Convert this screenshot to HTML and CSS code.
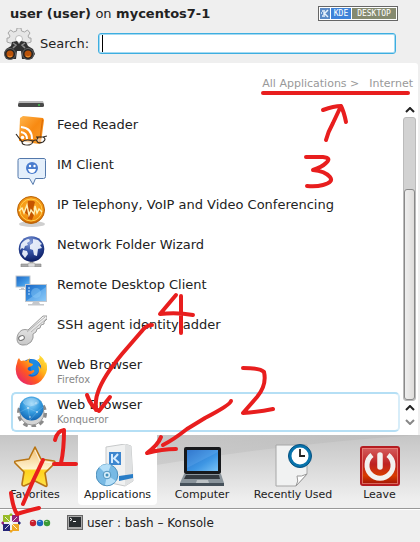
FILE: index.html
```html
<!DOCTYPE html>
<html lang="en">
<head>
<meta charset="utf-8">
<title>Application Launcher</title>
<meta name="viewport" content="width=device-width, initial-scale=1">
<link rel="stylesheet" href="styles.css">
</head>
<body>
<svg class="defs" width="0" height="0" aria-hidden="true">
  <defs>
    <linearGradient id="orange" x1="0" y1="0" x2="1" y2="1"><stop offset="0" stop-color="#ffb64d"/><stop offset=".5" stop-color="#f88a12"/><stop offset="1" stop-color="#f79d2e"/></linearGradient>
    <linearGradient id="screen" x1="0" y1="0" x2="1" y2="1"><stop offset="0" stop-color="#1c66c4"/><stop offset=".6" stop-color="#3f97e4"/><stop offset="1" stop-color="#79c2f5"/></linearGradient>
    <linearGradient id="metal" x1="0" y1="0" x2="0" y2="1"><stop offset="0" stop-color="#f6f6f6"/><stop offset="1" stop-color="#c8c8c8"/></linearGradient>
    <radialGradient id="globe" cx=".45" cy=".25" r=".75"><stop offset="0" stop-color="#8fa5dc"/><stop offset=".45" stop-color="#3553a6"/><stop offset="1" stop-color="#0b1d63"/></radialGradient>
    <radialGradient id="sky" cx=".5" cy=".3" r=".75"><stop offset="0" stop-color="#8fd2f8"/><stop offset=".5" stop-color="#3399dd"/><stop offset="1" stop-color="#0d5cab"/></radialGradient>
    <radialGradient id="coin" cx=".5" cy=".4" r=".6"><stop offset="0" stop-color="#ffb52e"/><stop offset=".8" stop-color="#f08c0c"/><stop offset="1" stop-color="#c05a00"/></radialGradient>
    <linearGradient id="gold" x1="0" y1="0" x2="0" y2="1"><stop offset="0" stop-color="#f0bd72"/><stop offset=".55" stop-color="#fff3cf"/><stop offset=".6" stop-color="#ffd21c"/><stop offset="1" stop-color="#ffe34a"/></linearGradient>
    <linearGradient id="fox" x1="1" y1="0" x2="0" y2="1"><stop offset="0" stop-color="#fff04a"/><stop offset=".35" stop-color="#ffb31a"/><stop offset=".6" stop-color="#ff5a1f"/><stop offset="1" stop-color="#e0108a"/></linearGradient>
    <linearGradient id="red" x1="0" y1="0" x2="0" y2="1"><stop offset="0" stop-color="#d66060"/><stop offset=".45" stop-color="#be2222"/><stop offset=".75" stop-color="#d83c00"/><stop offset="1" stop-color="#9c1006"/></linearGradient>
    <linearGradient id="swoosh" x1="0" y1="0" x2="1" y2="0"><stop offset="0" stop-color="#c6c6c6"/><stop offset="1" stop-color="#b9b9b9"/></linearGradient>
  </defs>
</svg>

<header class="header">
  <div class="title-row">
    <h1 class="title">user (user) <span class="on">on</span> mycentos7-1</h1>
    <div class="badge">
      <svg class="badge-logo" viewBox="0 0 10 11" aria-hidden="true"><rect width="10" height="11" fill="#5b8ac6"/><path d="M4 2v7M8 2L4.500 5.500L8 9M2 3h1M1 5h1M2 8h1" stroke="#e7f1fc" stroke-width="1.500" fill="none"/></svg>
      <span class="badge-kde">KDE</span><span class="badge-desktop">DESKTOP</span>
    </div>
  </div>
  <div class="search-row">
    <svg class="search-icon" viewBox="0 0 32 32" aria-hidden="true">
      <path d="M14 0h4l.5 3 3 1 3-2 2.500 3-2 3 1 2h2v4l-3 1H7l-3-1v-4h2l1-2-2-3 2.500-3 3 2 3-1z" fill="#e6e6e6" stroke="#a5a5a5"/>
      <circle cx="16" cy="11" r="3.500" fill="#fff" stroke="#bbb"/>
      <path d="M9 14l5-1 2 3 2-3 5 1 2 4 5 3 2 5-3 5H19l-1-8h-4l-1 8H3l-2-6 2-4 5-3z" fill="#303030"/>
      <path d="M10 15l3 2-3 3M22 15l-3 2 3 3" stroke="#8c8c8c" stroke-width="1.500" fill="none"/>
      <circle cx="7" cy="26" r="5.500" fill="#222" stroke="#656565"/><circle cx="25" cy="26" r="5.500" fill="#222" stroke="#656565"/>
      <circle cx="7" cy="26" r="3.500" fill="#b95209"/><circle cx="25" cy="26" r="3.500" fill="#b95209"/>
      <path d="M5 28q2 2 4 0M23 28q2 2 4 0" stroke="#f39a37" fill="none"/>
    </svg>
    <label class="search-label" for="search">Search:</label>
    <div class="search-box"><input id="search" class="search-input" type="text"><span class="caret"></span></div>
  </div>
</header>

<main class="panel">
  <nav class="crumbs"><a href="#all">All Applications &gt;</a><a href="#internet">Internet</a></nav>
  <div class="content">
    <ul class="apps">
      <li class="app-cut"><svg viewBox="0 0 32 8" aria-hidden="true"><path d="M4 0h24l1 3H3z" fill="#b8b8b8"/><rect x="3" y="2" width="26" height="4" rx="1.500" fill="#484848"/><circle cx="24" cy="4" r="1" fill="#42c34c"/></svg></li>
      <li><a class="app" href="#feed">
        <svg class="app-icon" viewBox="0 0 32 32" aria-hidden="true"><path d="M5 3l3-2 20 2 1 2-3 23-2 1-20-3z" fill="url(#orange)"/><path d="M27 4l1 1-3 23-1-1z" fill="#d96b08"/><g fill="none" stroke="#fff" stroke-width="2"><path d="M6 17q6 1 6 7M6 12q11 1 11 12"/></g><circle cx="7.500" cy="22.500" r="1.800" fill="#fff"/><path d="M1 19l6 8q0 3 5 3t6-4q3-2 4 0 1 3 6 1 4-3 0-5l-7 0M7 27q4-3 11-1M22 26l1-4M28 22l4-1" fill="none" stroke="#332b23" stroke-width="1.200"/><ellipse cx="12.500" cy="27.500" rx="4.500" ry="2" fill="#fff" opacity=".6"/><ellipse cx="25" cy="25" rx="3" ry="1.800" fill="#fff" opacity=".5"/></svg>
        <span class="app-text"><span class="app-name">Feed Reader</span></span></a></li>
      <li><a class="app" href="#im">
        <svg class="app-icon" viewBox="0 0 32 32" aria-hidden="true"><path d="M4.500 3.500h25q1 0 1 2v16q0 2-2 2h-8l-2.500 6-3.500-6h-10q-1.500 0-1.500-2v-16q0-2 1.500-2z" fill="#e4effb" stroke="#5378ab"/><circle cx="17" cy="13" r="6" fill="#4a7cce"/><circle cx="15" cy="11" r="1.200" fill="#fff"/><circle cx="19.500" cy="11" r="1.200" fill="#fff"/><path d="M13 14h8q-1 4-4 4t-4-4z" fill="#fff"/></svg>
        <span class="app-text"><span class="app-name">IM Client</span></span></a></li>
      <li><a class="app" href="#telephony">
        <svg class="app-icon" viewBox="0 0 32 32" aria-hidden="true"><ellipse cx="17" cy="29" rx="13" ry="3" fill="#bbb" opacity=".7"/><circle cx="16" cy="15" r="13.500" fill="url(#coin)" stroke="#b8660b"/><circle cx="16" cy="15" r="11" fill="none" stroke="#ffd04f"/><path d="M13 6q5-1 7 1l-2 7 2 3-3 8-4-1v-4l-4-3 3-5z" fill="#c55500"/><path d="M4 16l3-3 2 5 3-8 2 10 2-5 3 4 1-8 2 7 2-4 3 3" fill="none" stroke="#fff1b5" stroke-width="1.400"/></svg>
        <span class="app-text"><span class="app-name">IP Telephony, VoIP and Video Conferencing</span></span></a></li>
      <li><a class="app" href="#network">
        <svg class="app-icon" viewBox="0 0 32 32" aria-hidden="true"><path d="M15 26h3v3h8v3H6v-3h9z" fill="#aaa" stroke="#858585" stroke-width=".6"/><rect x="13" y="28" width="7" height="4" rx="1" fill="#ddd" stroke="#999" stroke-width=".6"/><circle cx="16.500" cy="14" r="12.800" fill="url(#globe)"/><path d="M6 9q4-5 8-5l1 2-3 2 1 2-3 1-1 3-2-1-2 2zM18 4l5 1 4 4-2 1 2 3-4 1-1 7-3-1-1-5-3-1v-4l3-2zM8 15l4 1 1 3-3 4-3-4z" fill="#eef3fc" opacity=".93"/></svg>
        <span class="app-text"><span class="app-name">Network Folder Wizard</span></span></a></li>
      <li><a class="app" href="#remote">
        <svg class="app-icon" viewBox="0 0 32 32" aria-hidden="true"><g stroke="#c1c7cf"><rect x="1" y="1" width="14" height="11" fill="url(#screen)"/><rect x="10.500" y="9.500" width="21" height="17" fill="url(#screen)"/></g><path d="M6 13h3v1h2v1H4v-1h2zM18 27h6l1 2h4v1.500H13V29h4z" fill="#c5c8cc"/><path d="M13 13h2M13 16h2M13 19h2" stroke="#c6e5ff"/><path d="M11 26L31 12v14z" fill="#b4ddff" opacity=".35"/><circle cx="21" cy="18" r="5" fill="#8fcdf8" opacity=".45"/></svg>
        <span class="app-text"><span class="app-name">Remote Desktop Client</span></span></a></li>
      <li><a class="app" href="#ssh">
        <svg class="app-icon" viewBox="0 0 32 32" aria-hidden="true"><path d="M28 1h4v3l-3 3v2l-3 1-1 3-3 1-1 3-3 2q1 4-2 8-4 4-9 3-5-1-5-6 0-6 5-9 3-1 6 0z" fill="url(#metal)" stroke="#929292" stroke-width=".9"/><path d="M12 17L30 2M16 17L31 4" stroke="#b5b5b5" stroke-width="1"/><ellipse cx="6.500" cy="23" rx="3" ry="2.200" fill="#fff" stroke="#777" transform="rotate(-25 6.500 23)"/></svg>
        <span class="app-text"><span class="app-name">SSH agent identity adder</span></span></a></li>
      <li><a class="app" href="#firefox">
        <svg class="app-icon" viewBox="0 0 32 32" aria-hidden="true"><circle cx="16" cy="15" r="11" fill="#1765cf"/><path d="M15 5q5-2 8 2 3 4 1 9-3 5-8 4" fill="#20a4ee" opacity=".6"/><path d="M4 3q1 2 2 3 3-1 5 0l4-3q-2 4 0 5l3 1q0 2-4 3-2 1-1 3 3 2 5 0 2 0 1 2-3 3-6 3 3 3 7 1 6-3 3-10 3 1 3 3 1-5-4-9 4-1 2-5 5 3 6 8 1-1 1-1 3 8-2 15-5 8-13 8-8 0-13-7-4-8-1-15 0-3 2-5z" fill="url(#fox)"/></svg>
        <span class="app-text"><span class="app-name">Web Browser</span><span class="app-sub">Firefox</span></span></a></li>
      <li><a class="app app-selected" href="#konqueror">
        <svg class="app-icon" viewBox="0 0 32 32" aria-hidden="true"><circle cx="17" cy="18" r="13" fill="none" stroke="#8a8a8a" stroke-width="4" stroke-dasharray="4.500 3.670"/><circle cx="17" cy="18" r="12" fill="#d5d5d5" stroke="#999"/><circle cx="16.500" cy="13.500" r="12" fill="url(#sky)"/><path d="M5 17l8-4 9 4 6-5M8 7l5 6 9-6M13 13l2 12 7-8" stroke="#b7e3ff" stroke-width=".5" fill="none" opacity=".45"/><ellipse cx="16" cy="7" rx="8" ry="4" fill="#fff" opacity=".25"/><g fill="#fff"><circle cx="13" cy="13" r=".8"/><circle cx="22" cy="17" r=".8"/><circle cx="21" cy="8" r=".6"/><circle cx="15" cy="22" r=".7"/></g></svg>
        <span class="app-text"><span class="app-name">Web Browser</span><span class="app-sub">Konqueror</span></span></a></li>
    </ul>
    <div class="scroll">
      <button class="scroll-btn" type="button" aria-label="Up"><svg viewBox="0 0 10 6"><path d="M1 5l4-4 4 4" fill="none" stroke="#222" stroke-width="2"/></svg></button>
      <div class="track"><div class="thumb"></div></div>
      <button class="scroll-btn" type="button" aria-label="Page up"><svg viewBox="0 0 10 6"><path d="M1 5l4-4 4 4" fill="none" stroke="#222" stroke-width="2"/></svg></button>
      <button class="scroll-btn" type="button" aria-label="Down"><svg viewBox="0 0 10 6"><path d="M1 1l4 4 4-4" fill="none" stroke="#888" stroke-width="2"/></svg></button>
    </div>
  </div>
</main>

<nav class="tabs">
  <svg class="tabs-shade" viewBox="0 0 420 70" preserveAspectRatio="none" aria-hidden="true"><path d="M150 0H420Q290 8 150 31z" fill="url(#swoosh)" opacity=".65"/></svg>
  <button class="tab tab-first" type="button">
    <svg class="tab-icon" viewBox="0 0 44 44" aria-hidden="true"><path d="M22 3l6 12 13 2q2 1 0 3l-9 9 2 12q0 2-2 1l-10-5-11 5q-2 0-2-2l2-12-9-9q-1-2 1-2l13-2z" fill="url(#gold)" stroke="#b87514" stroke-width="1.600" stroke-linejoin="round"/><path d="M22 6l5 11 12 2" fill="none" stroke="#fff" opacity=".7"/></svg>
    <span>Favorites</span></button>
  <button class="tab tab-active" type="button">
    <svg class="tab-icon" viewBox="0 0 44 44" aria-hidden="true"><path d="M10 3L29 0 35 2 37 37 29 42 10 38z" fill="#f0f1f1" stroke="#c7c9ca"/><path d="M29 0l6 2 2 35-8 5z" fill="#dfe1e2"/><rect x="13" y="8" width="12" height="13" fill="#3d86cf"/><path d="M16 10v9M22 10l-4 4.500 5 4.500" stroke="#d6ecff" stroke-width="2" fill="none"/><path d="M23 32l14-2v4l-14 3z" fill="#287dc7"/><circle cx="11" cy="31" r="10.800" fill="#77b9e4" stroke="#4e91bd"/><path d="M11 31L3 23q7-5 12-2zM11 31l9 6q-5 5-11 4z" fill="#c4e9fc" opacity=".8"/><circle cx="11" cy="31" r="3.800" fill="#d7eefa" stroke="#5094bf"/><circle cx="11" cy="31" r="1.500" fill="#438fbb"/></svg>
    <span>Applications</span></button>
  <button class="tab" type="button">
    <svg class="tab-icon" viewBox="0 0 44 44" aria-hidden="true"><rect x="4" y="3" width="37" height="27" rx="2" fill="#17191c"/><rect x="7" y="6" width="31" height="21" fill="url(#screen)"/><path d="M7 6h31v2L7 24z" fill="#99ceff" opacity=".18"/><path d="M4 30h37l3 9H0z" fill="#8a949b"/><path d="M6 31h33l1 4H4z" fill="#343a40"/><path d="M17 36h11l1 3H16z" fill="#bcc2c5"/><path d="M0 39h44v3H0z" fill="#46515a"/></svg>
    <span>Computer</span></button>
  <button class="tab" type="button">
    <svg class="tab-icon" viewBox="0 0 44 44" aria-hidden="true"><path d="M5 1h31v29L25 42H5z" fill="#f1f2f2" stroke="#a6a6a6"/><path d="M25 42q3-5 1-10 4 1 10-2z" fill="#fff" stroke="#999"/><circle cx="29" cy="12" r="10" fill="#fff" stroke="#0873ac" stroke-width="3"/><circle cx="29" cy="12" r="11.500" fill="none" stroke="#075180"/><path d="M29 5v7h5" fill="none" stroke="#222" stroke-width="1.800"/></svg>
    <span>Recently Used</span></button>
  <button class="tab" type="button">
    <svg class="tab-icon" viewBox="0 0 44 44" aria-hidden="true"><rect x="3" y="3" width="38" height="38" rx="2" fill="url(#red)" stroke="#b51c21" stroke-width="2"/><rect x="4.500" y="4.500" width="35" height="35" fill="none" stroke="#f08c82" opacity=".7"/><path d="M14 11a13 13 0 1 0 16 0" fill="none" stroke="#f3f1ef" stroke-width="5"/><path d="M22 11v12" stroke="#f3f1ef" stroke-width="5.500" stroke-linecap="round"/></svg>
    <span>Leave</span></button>
</nav>

<footer class="taskbar">
  <button class="task-btn" type="button" aria-label="Menu"><svg width="20" height="20" viewBox="0 0 20 20"><path d="M10 0l3 3H7z" fill="#98bb28"/><path d="M0 10l3-3v6z" fill="#932279"/><path d="M20 10l-3-3v6z" fill="#262577"/><path d="M10 20l-3-3h6z" fill="#efa724"/><path d="M2 2h7v7H2z" fill="#98bb28"/><path d="M11 2h7v7h-7z" fill="#932279"/><path d="M2 11h7v7H2z" fill="#262577"/><path d="M11 11h7v7h-7z" fill="#efa724"/><path d="M4 4l12 12M16 4L4 16" stroke="#fff" stroke-width=".8"/></svg></button>
  <button class="task-btn" type="button" aria-label="Desktops"><svg width="22" height="8" viewBox="0 0 22 8"><circle cx="4" cy="4" r="3.200" fill="#c91f2d"/><circle cx="11" cy="4" r="3.200" fill="#1e66bd"/><circle cx="18" cy="4" r="3.200" fill="#3b9b37"/><path d="M2.500 2.500h2M9.500 2.500h2M16.500 2.500h2" stroke="#fff" opacity=".6"/></svg></button>
  <button class="task-btn task-window" type="button"><svg width="16" height="15" viewBox="0 0 16 15" aria-hidden="true"><rect x=".5" y=".5" width="15" height="14" fill="#aaa" stroke="#666"/><rect x="2" y="2" width="12" height="10" fill="#292d30"/><path d="M3 3l2 1.500L3 6M6 6.500h3" stroke="#fff" fill="none"/></svg><span>user : bash – Konsole</span></button>
</footer>

<svg class="marks" width="420" height="542" viewBox="0 0 420 542" aria-hidden="true">
  <path d="M263 93H408"/>
  <path d="M326 140Q328 132 333 123L341 106M323 110Q334 106 341 106Q344 112 346 122"/>
  <path d="M306 157H323Q332 158 326 163Q322 167 313 170Q325 171 330 177Q334 182 323 185Q316 187 307 186"/>
  <path d="M176 295L160 314Q177 312 193 315M181 296V333"/>
  <path d="M152 325Q146 325 141 332L122 354Q103 377 98 392Q95 400 96 410M87 395Q91 407 99 411L110 397"/>
  <path d="M243 368Q260 368 264 372Q267 385 257 397L243 413Q259 412 273 409"/>
  <path d="M231 401Q230 405 205 418L187 429Q173 440 163 445M161 437Q158 445 147 453Q162 449 176 449"/>
  <path d="M55 440Q57 431 64 430Q64 450 61 463M54 464H76"/>
  <path d="M43 460L33 481L23 504M11 493Q13 508 17 514Q26 511 39 508"/>
</svg>
</body>
</html>
```
FILE: styles.css
```css
* { box-sizing: border-box; }

body {
  margin: 0;
  position: relative;
  min-height: 100vh;
  display: flex;
  flex-direction: column;
  background: #efefef;
  color: #222;
  font: 13px/16px "DejaVu Sans", sans-serif;
}

button {
  border: 0;
  padding: 0;
  background: none;
  color: inherit;
  font: inherit;
}

svg { display: block; flex: none; }
a { color: inherit; text-decoration: none; }
.defs { position: absolute; }

.header { padding: 5px 24px 2px 2px; }

.title-row {
  display: flex;
  justify-content: space-between;
  align-items: center;
  padding-left: 8px;
  height: 17px;
}

.title { margin: 0; font-size: 13px; line-height: 16px; }
.on { font-weight: normal; }

.badge {
  display: flex;
  gap: 1px;
  margin-right: -2px;
  width: 80px;
  height: 15px;
  padding: 1px;
  border: 1px solid #666;
  background: #fff;
  color: #fff;
  font: 8px/11px "DejaVu Sans Mono", monospace;
}
.badge-logo { width: 10px; height: 11px; }
.badge-kde { flex: 20; background: #3e83d9; text-align: center; }
.badge-desktop { flex: 44; background: #858a70; text-align: center; }

.search-row { display: flex; align-items: center; height: 39px; padding-top: 4px; }
.search-icon { width: 34px; height: 32px; }
.search-label { margin: 0 9px 0 4px; }
.search-box { flex: 1; position: relative; }
.search-input {
  display: block;
  width: 100%;
  height: 21px;
  padding: 0 4px;
  border: 1px solid #3daee0;
  border-radius: 3px;
  box-shadow: inset 0 0 0 1px #a5daf2;
  background: #fff;
  font: inherit;
  outline: 0;
}
.caret { position: absolute; left: 4px; top: 2px; width: 1px; height: 17px; background: #000; }

.panel {
  flex: 1;
  display: flex;
  flex-direction: column;
  margin-right: 2px;
  padding-bottom: 3px;
  border-top-right-radius: 3px;
  background: #fff;
}

.crumbs {
  display: flex;
  justify-content: flex-end;
  gap: 10px;
  padding: 13px 5px 9px;
  color: #999;
  font-size: 11px;
  line-height: 16px;
}

.content { flex: 1; display: flex; gap: 3px; padding: 0 2px 0 11px; }
.apps { flex: 1; margin: 0; padding: 0; list-style: none; }
.app-cut { height: 11px; padding-left: 4px; }
.app-cut svg { width: 32px; height: 8px; }

.app {
  display: flex;
  gap: 10px;
  height: 40px;
  padding: 2px 3px;
  border: 1px solid transparent;
}
.app-icon { width: 32px; height: 32px; }
.app-text { display: flex; flex-direction: column; line-height: 16px; padding-top: 2px; }
.app-sub { color: #888; font-size: 10px; line-height: 14px; }
.app-selected { border: 2px solid #b5dff5; border-right-color: #d7edf9; border-radius: 5px; padding: 1px 2px; }

.scroll { display: flex; flex-direction: column; align-items: center; width: 13px; padding: 2px 0 3px; }
.scroll-btn { display: grid; place-items: center; width: 13px; height: 14px; }
.scroll-btn svg { width: 10px; height: 6px; }
.track {
  flex: 1;
  display: flex;
  align-items: flex-end;
  width: 13px;
  border: 1px solid #bbb;
  border-radius: 3px;
  background: #d2d2d2;
}
.thumb {
  width: 100%;
  height: 75%;
  border: 1px solid #8a8a8a;
  border-radius: 3px;
  background: linear-gradient(90deg, #eee, #dfdddb);
}

.tabs {
  position: relative;
  display: grid;
  grid-template-columns: 78fr 79fr 90fr 92fr 81fr;
  height: 74px;
  padding-bottom: 3px;
  border-bottom: 1px solid #999;
  background: linear-gradient(#c5c5c5, #efefef 90%);
  font-size: 11px;
  line-height: 14px;
}
.tabs-shade { position: absolute; width: 100%; height: 70px; }
.tab {
  position: relative;
  display: flex;
  flex-direction: column;
  align-items: center;
  padding-top: 9px;
  white-space: nowrap;
}
.tab-first { padding-right: 8px; }
.tab-active { border-radius: 0 0 4px 4px; background: #fff; }
.tab-icon { width: 44px; height: 44px; }

.taskbar {
  display: flex;
  align-items: center;
  height: 33px;
  padding: 0 1px 7px;
  border-top: 1px solid #fff;
  font-size: 12px;
}
.task-btn + .task-btn { margin-left: 8px; }
.taskbar .task-window { display: flex; align-items: center; gap: 4px; margin-left: 16px; }

.marks {
  position: absolute;
  left: 0;
  top: 0;
  pointer-events: none;
  fill: none;
  stroke: #e81e1e;
  stroke-width: 4;
  stroke-linecap: round;
  stroke-linejoin: round;
}
```
